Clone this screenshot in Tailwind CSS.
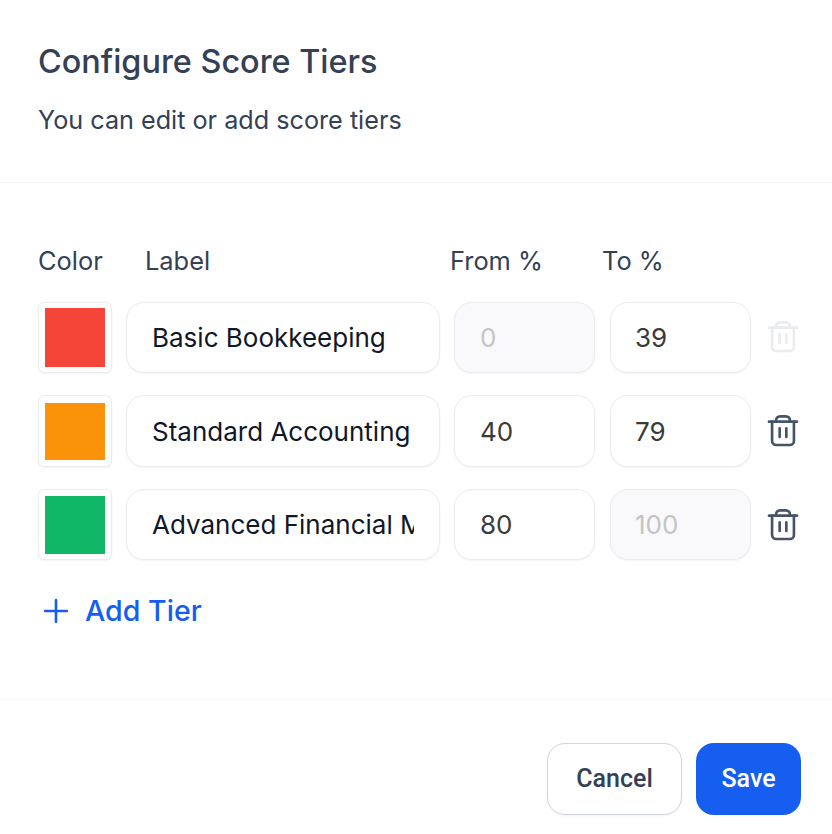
<!doctype html>
<html>
<head>
<meta charset="utf-8">
<script src="https://cdn.jsdelivr.net/npm/@tailwindcss/browser@4"></script>
</head>
<body class="bg-white">
<div class="w-[832px] h-[834px] overflow-hidden bg-white font-['Inter',sans-serif] flex flex-col">
  <header class="h-[183px] shrink-0 border-b border-[#f2f4f7] pl-[38px] pt-[42px]">
    <h1 class="text-[32.4px] leading-[40px] font-medium text-[#344054]">Configure Score Tiers</h1>
    <p class="mt-[27px] text-[25.2px] leading-[22px] text-[#344054]">You can edit or add score tiers</p>
  </header>
  <main class="h-[517px] shrink-0 border-b border-[#f2f4f7] pl-[38px] pt-[62px]">
    <div class="flex h-[32px] items-center text-[25.4px] font-normal text-[#344054]">
      <span class="w-[107px]">Color</span>
      <span class="w-[305px]">Label</span>
      <span class="w-[153px]">From %</span>
      <span class="-ml-[1px]">To %</span>
    </div>
    <div class="mt-[24.7px] flex flex-col gap-[22px]">
      <div class="flex h-[71.6px] items-center">
        <div class="flex h-full w-[74px] shrink-0 items-center justify-center rounded-[6px] border border-[#eaecf0] bg-white shadow-xs"><div class="h-[59px] w-[60px] bg-[#f44538]"></div></div>
        <input class="ml-[14px] h-full w-[314px] rounded-[18px] border border-[#eaecf0] bg-white px-[25px] text-[26px] text-[#101828] shadow-xs outline-none" value="Basic Bookkeeping">
        <input class="ml-[14px] h-full w-[141px] rounded-[18px] border border-[#eaecf0] bg-[#f9f9fb] px-[25px] text-[26px] text-[#c4c4c4] shadow-xs outline-none" value="0" disabled>
        <input class="ml-[15px] h-full w-[141px] rounded-[18px] border border-[#eaecf0] bg-white px-[24px] text-[26px] text-[#3a3a3a] shadow-xs outline-none" value="39">
        <svg class="ml-[16px] size-[32px] text-[#eaecf0]" viewBox="0 0 24 24" fill="none" stroke="currentColor" stroke-width="2" stroke-linecap="round" stroke-linejoin="round"><path d="M1.5 5h21"/><path d="M3.8 5v14.5a3 3 0 0 0 3 3h10.4a3 3 0 0 0 3-3V5"/><path d="M6.8 5V4a3 3 0 0 1 3-3h4.4a3 3 0 0 1 3 3v1"/><path d="M9.5 10v6.5M14.5 10v6.5"/></svg>
      </div>
      <div class="flex h-[71.6px] items-center">
        <div class="flex h-full w-[74px] shrink-0 items-center justify-center rounded-[6px] border border-[#eaecf0] bg-white shadow-xs"><div class="h-[57px] w-[60px] bg-[#fb930a]"></div></div>
        <input class="ml-[14px] h-full w-[314px] rounded-[18px] border border-[#eaecf0] bg-white px-[25px] text-[26px] text-[#101828] shadow-xs outline-none" value="Standard Accounting">
        <input class="ml-[14px] h-full w-[141px] rounded-[18px] border border-[#eaecf0] bg-white px-[25px] text-[26px] text-[#3a3a3a] shadow-xs outline-none" value="40">
        <input class="ml-[15px] h-full w-[141px] rounded-[18px] border border-[#eaecf0] bg-white px-[24px] text-[26px] text-[#3a3a3a] shadow-xs outline-none" value="79">
        <svg class="ml-[16px] size-[32px] text-[#475467]" viewBox="0 0 24 24" fill="none" stroke="currentColor" stroke-width="2" stroke-linecap="round" stroke-linejoin="round"><path d="M1.5 5h21"/><path d="M3.8 5v14.5a3 3 0 0 0 3 3h10.4a3 3 0 0 0 3-3V5"/><path d="M6.8 5V4a3 3 0 0 1 3-3h4.4a3 3 0 0 1 3 3v1"/><path d="M9.5 10v6.5M14.5 10v6.5"/></svg>
      </div>
      <div class="flex h-[71.6px] items-center">
        <div class="flex h-full w-[74px] shrink-0 items-center justify-center rounded-[6px] border border-[#eaecf0] bg-white shadow-xs"><div class="h-[58px] w-[60px] bg-[#10b866]"></div></div>
        <input class="ml-[14px] h-full w-[314px] rounded-[18px] border border-[#eaecf0] bg-white px-[25px] text-[26px] text-[#101828] shadow-xs outline-none" value="Advanced Financial Management">
        <input class="ml-[14px] h-full w-[141px] rounded-[18px] border border-[#eaecf0] bg-white px-[25px] text-[26px] text-[#3a3a3a] shadow-xs outline-none" value="80">
        <input class="ml-[15px] h-full w-[141px] rounded-[18px] border border-[#eaecf0] bg-[#f9f9fb] px-[24px] text-[26px] text-[#c4c4c4] shadow-xs outline-none" value="100" disabled>
        <svg class="ml-[16px] size-[32px] text-[#475467]" viewBox="0 0 24 24" fill="none" stroke="currentColor" stroke-width="2" stroke-linecap="round" stroke-linejoin="round"><path d="M1.5 5h21"/><path d="M3.8 5v14.5a3 3 0 0 0 3 3h10.4a3 3 0 0 0 3-3V5"/><path d="M6.8 5V4a3 3 0 0 1 3-3h4.4a3 3 0 0 1 3 3v1"/><path d="M9.5 10v6.5M14.5 10v6.5"/></svg>
      </div>
    </div>
    <button class="mt-[31px] ml-[5px] flex h-[40px] items-center gap-[16px] text-[28.6px] font-medium text-[#155eef]">
      <svg class="size-[26px]" viewBox="0 0 24 24" fill="none" stroke="currentColor" stroke-width="2.4" stroke-linecap="round"><path d="M12 2v20M2 12h20"/></svg>
      Add Tier
    </button>
  </main>
  <footer class="flex flex-1 items-start justify-end gap-[14px] pr-[31px] pt-[43px]">
    <button class="h-[72px] w-[135px] rounded-[18px] border border-[#d0d5dd] bg-white font-['Roboto',sans-serif] text-[25px] font-medium text-[#344054] shadow-xs">Cancel</button>
    <button class="h-[72px] w-[105px] rounded-[18px] bg-[#155eef] font-['Roboto',sans-serif] text-[25px] font-medium text-white">Save</button>
  </footer>
</div>
</body>
</html>
